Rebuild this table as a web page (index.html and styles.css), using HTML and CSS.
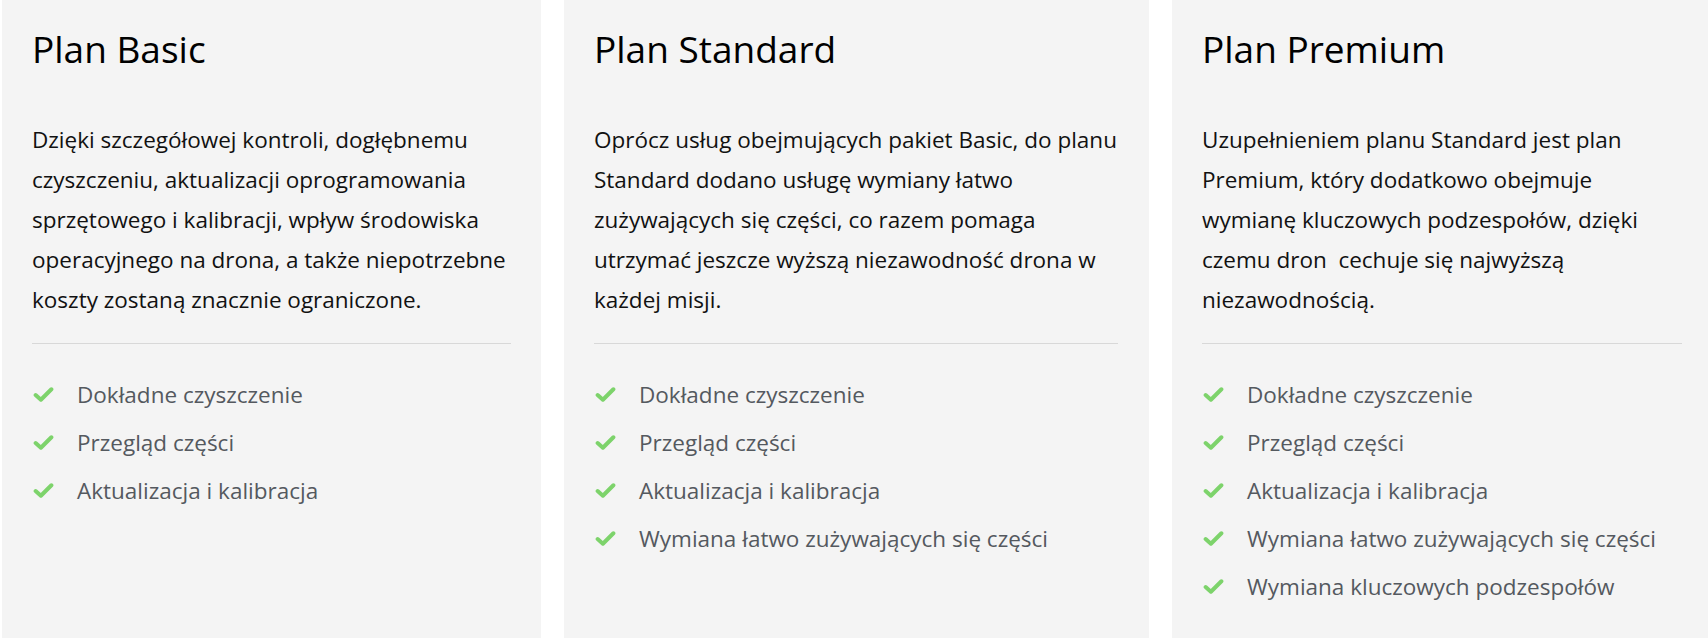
FILE: index.html
```html
<!DOCTYPE html>
<html lang="pl">
<head>
<meta charset="utf-8">
<title>Plany</title>
<link rel="stylesheet" href="styles.css">
</head>
<body>
<div class="plans">
  <section class="plan plan-basic">
    <h2 class="plan-title">Plan Basic</h2>
    <p class="plan-desc">Dzięki szczegółowej kontroli, dogłębnemu<br>czyszczeniu, aktualizacji oprogramowania<br>sprzętowego i kalibracji, wpływ środowiska<br>operacyjnego na drona, a także niepotrzebne<br>koszty zostaną znacznie ograniczone.</p>
    <hr class="plan-rule">
    <ul class="plan-list">
      <li><svg class="check" viewBox="0 0 20 16"><polyline points="2.5,8.5 7.5,13 17.5,3" /></svg><span>Dokładne czyszczenie</span></li>
      <li><svg class="check" viewBox="0 0 20 16"><polyline points="2.5,8.5 7.5,13 17.5,3" /></svg><span>Przegląd części</span></li>
      <li><svg class="check" viewBox="0 0 20 16"><polyline points="2.5,8.5 7.5,13 17.5,3" /></svg><span>Aktualizacja i kalibracja</span></li>
    </ul>
  </section>
  <section class="plan plan-standard">
    <h2 class="plan-title">Plan Standard</h2>
    <p class="plan-desc">Oprócz usług obejmujących pakiet Basic, do planu<br>Standard dodano usługę wymiany łatwo<br>zużywających się części, co razem pomaga<br>utrzymać jeszcze wyższą niezawodność drona w<br>każdej misji.</p>
    <hr class="plan-rule">
    <ul class="plan-list">
      <li><svg class="check" viewBox="0 0 20 16"><polyline points="2.5,8.5 7.5,13 17.5,3" /></svg><span>Dokładne czyszczenie</span></li>
      <li><svg class="check" viewBox="0 0 20 16"><polyline points="2.5,8.5 7.5,13 17.5,3" /></svg><span>Przegląd części</span></li>
      <li><svg class="check" viewBox="0 0 20 16"><polyline points="2.5,8.5 7.5,13 17.5,3" /></svg><span>Aktualizacja i kalibracja</span></li>
      <li><svg class="check" viewBox="0 0 20 16"><polyline points="2.5,8.5 7.5,13 17.5,3" /></svg><span>Wymiana łatwo zużywających się części</span></li>
    </ul>
  </section>
  <section class="plan plan-premium">
    <h2 class="plan-title">Plan Premium</h2>
    <p class="plan-desc">Uzupełnieniem planu Standard jest plan<br>Premium, który dodatkowo obejmuje<br>wymianę kluczowych podzespołów, dzięki<br>czemu dron&nbsp; cechuje się najwyższą<br>niezawodnością.</p>
    <hr class="plan-rule">
    <ul class="plan-list">
      <li><svg class="check" viewBox="0 0 20 16"><polyline points="2.5,8.5 7.5,13 17.5,3" /></svg><span>Dokładne czyszczenie</span></li>
      <li><svg class="check" viewBox="0 0 20 16"><polyline points="2.5,8.5 7.5,13 17.5,3" /></svg><span>Przegląd części</span></li>
      <li><svg class="check" viewBox="0 0 20 16"><polyline points="2.5,8.5 7.5,13 17.5,3" /></svg><span>Aktualizacja i kalibracja</span></li>
      <li><svg class="check" viewBox="0 0 20 16"><polyline points="2.5,8.5 7.5,13 17.5,3" /></svg><span>Wymiana łatwo zużywających się części</span></li>
      <li><svg class="check" viewBox="0 0 20 16"><polyline points="2.5,8.5 7.5,13 17.5,3" /></svg><span>Wymiana kluczowych podzespołów</span></li>
    </ul>
  </section>
</div>
</body>
</html>
```
FILE: styles.css
```css
html, body {
  margin: 0;
  padding: 0;
  background: #ffffff;
  overflow: hidden;
}

body {
  font-family: "Open Sans", "Noto Sans", "Liberation Sans", sans-serif;
  color: #111;
}

.plans {
  display: flex;
  gap: 23px;
  padding-left: 2px;
  align-items: flex-start;
}

.plan {
  flex: none;
  box-sizing: border-box;
  height: 638px;
  background: #f4f4f4;
  padding: 27px 30px 0 30px;
}

.plan-basic { width: 539px; }
.plan-standard { width: 585px; padding-right: 31px; }
.plan-premium { width: 540px; }

.plan-title {
  margin: 0;
  font-size: 37px;
  font-weight: 400;
  line-height: 44px;
  color: #000;
}

.plan-desc {
  margin: 49px 0 0 0;
  font-size: 22.5px;
  line-height: 40px;
  white-space: nowrap;
  color: #111;
}

.plan-rule {
  margin: 23px 0 0 0;
  border: 0;
  height: 1px;
  background: #d8d8d8;
}

.plan-list {
  list-style: none;
  margin: 26px 0 0 0;
  padding: 0;
}

.plan-list li {
  display: flex;
  align-items: center;
  height: 48px;
  font-size: 22.5px;
  color: #54595f;
}

.check {
  width: 21px;
  height: 17px;
  flex: none;
  margin-right: 23px;
  margin-left: 1px;
}

.check polyline {
  fill: none;
  stroke: #7dd36b;
  stroke-width: 3.8;
  stroke-linecap: round;
  stroke-linejoin: round;
}
```
